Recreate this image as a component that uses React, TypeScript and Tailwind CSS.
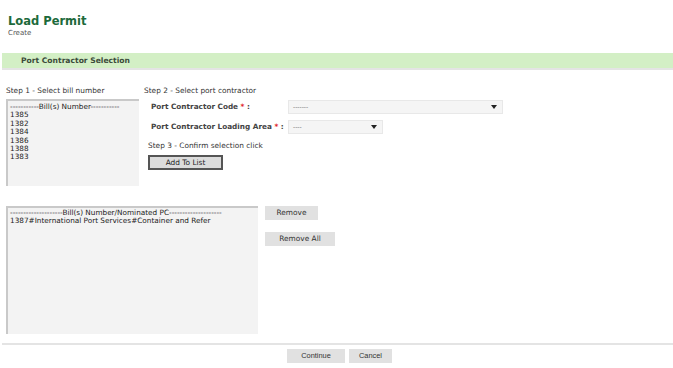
import React from 'react';

const bills = ['1385', '1382', '1384', '1386', '1388', '1383'];

function GreyButton({ children, className = '' }: { children: React.ReactNode; className?: string }) {
  return (
    <button className={`h-[14px] bg-[#e1e1e1] text-[7.4px] text-[#333] leading-none ${className}`}>{children}</button>
  );
}

function SelectBox({ value, className = '' }: { value: string; className?: string }) {
  return (
    <div className={`h-[14px] flex items-center justify-between border border-[#e8e8e8] bg-[#f5f5f5] pl-[4px] pr-[5px] ${className}`}>
      <span className="text-[6px] text-[#666] leading-none">{value}</span>
      <svg width="6" height="4" viewBox="0 0 6 4">
        <path d="M0 0H6L3 4Z" fill="#222" />
      </svg>
    </div>
  );
}

export default function App() {
  return (
    <div className="w-[673px] h-[368px] bg-white overflow-hidden font-['DejaVu_Sans',sans-serif] text-[#333]">
      {/* Header */}
      <div className="pl-[8px] pt-[13px] h-[53px]">
        <h1 className="text-[11.5px] font-bold text-[#1d6a3b] leading-[16px]">Load Permit</h1>
        <div className="text-[7px] text-[#555] leading-[8px]">Create</div>
      </div>

      {/* Section bar */}
      <div className="ml-[2px] h-[15px] bg-[#d3efc5] border-b-[2px] border-[#e4e4e4] box-content flex items-center pl-[19px]">
        <span className="text-[7.6px] font-bold text-[#3c4b3a]">Port Contractor Selection</span>
      </div>

      {/* Steps */}
      <div className="flex pl-[6px] pt-[16px] gap-[5px]">
        <div className="w-[133px]">
          <div className="text-[7.4px] leading-[9px] text-[#333]">Step 1 - Select bill number</div>
          <div className="mt-[4px] h-[87px] border-l-[2px] border-t-[2px] border-[#c9c9c9] bg-[#f3f3f3] pl-[2px] pt-[2px] text-[7.3px] leading-[8.4px] text-[#222]">
            <div>-----------Bill(s) Number-----------</div>
            {bills.map((b) => (
              <div key={b}>{b}</div>
            ))}
          </div>
        </div>

        <div className="flex-1">
          <div className="text-[7.4px] leading-[9px] text-[#333]">Step 2 - Select port contractor</div>
          <div className="mt-[5px] flex items-center">
            <div className="w-[144px] pl-[7px] text-[7.3px] font-bold text-[#444]">
              Port Contractor Code <span className="text-[#e02020]">*</span> :
            </div>
            <SelectBox value="-------" className="w-[215px]" />
          </div>
          <div className="mt-[6px] flex items-center">
            <div className="w-[144px] pl-[7px] text-[7.3px] font-bold text-[#444]">
              Port Contractor Loading Area <span className="text-[#e02020]">*</span> :
            </div>
            <SelectBox value="----" className="w-[95px]" />
          </div>
          <div className="mt-[7px] pl-[4px] text-[7.4px] leading-[9px] text-[#333]">Step 3 - Confirm selection click</div>
          <div className="mt-[5px] pl-[4px] flex">
            <button className="w-[75px] h-[15px] bg-[#dcdcdc] border-[2px] border-double border-[#555] text-[7.4px] text-[#222] leading-none">
              Add To List
            </button>
          </div>
        </div>
      </div>

      {/* Nominated list */}
      <div className="flex pl-[6px] pt-[20px] gap-[7px]">
        <div className="w-[252px] h-[128px] border-l-[2px] border-t-[2px] border-[#c9c9c9] bg-[#f3f3f3] pl-[2px] pt-[1px] text-[7.3px] leading-[8.4px] text-[#222]">
          <div>--------------------Bill(s) Number/Nominated PC--------------------</div>
          <div>1387#International Port Services#Container and Refer</div>
        </div>
        <div className="flex flex-col items-start gap-[12px]">
          <GreyButton className="w-[53px]">Remove</GreyButton>
          <GreyButton className="w-[70px]">Remove All</GreyButton>
        </div>
      </div>

      {/* Footer */}
      <div className="mt-[9px] ml-[2px] border-t-[2px] border-[#e4e4e4] pt-[4px] flex justify-center gap-[4px] pl-[4px]">
        <GreyButton className="w-[58px] font-['Liberation_Sans',sans-serif]">Continue</GreyButton>
        <GreyButton className="w-[43px] font-['Liberation_Sans',sans-serif]">Cancel</GreyButton>
      </div>
    </div>
  );
}
